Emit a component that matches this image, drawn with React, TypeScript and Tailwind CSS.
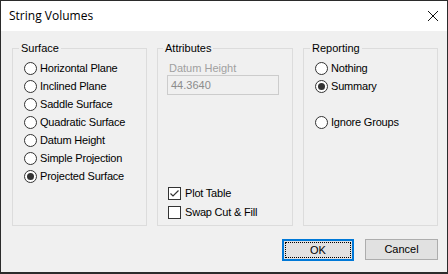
import React, { useState } from 'react';

const uiFont = { fontFamily: '"Liberation Sans", Arial, sans-serif' };

const Radio: React.FC<{ label: string; checked: boolean; onSelect: () => void }> = ({ label, checked, onSelect }) => (
  <label className="flex items-center h-[18px] cursor-default" onClick={onSelect}>
    <span className="w-[13px] h-[13px] rounded-full border border-[#333333] bg-white flex items-center justify-center shrink-0">
      {checked && <span className="w-[7px] h-[7px] rounded-full bg-[#333333]" />}
    </span>
    <span className="ml-[3px] text-[11px] leading-[13px] tracking-[-0.2px] text-black">{label}</span>
  </label>
);

const Check: React.FC<{ label: string; checked: boolean; onToggle: () => void }> = ({ label, checked, onToggle }) => (
  <label className="flex items-center h-[19px] cursor-default" onClick={onToggle}>
    <span className="w-[13px] h-[13px] border border-[#333333] bg-white flex items-center justify-center shrink-0">
      {checked && (
        <svg width="11" height="11" viewBox="0 0 11 11">
          <path d="M1.5 5.5 L4 8 L9.5 2.5" fill="none" stroke="#333333" strokeWidth="1.2" />
        </svg>
      )}
    </span>
    <span className="ml-[4px] text-[11px] leading-[13px] tracking-[-0.2px] text-black">{label}</span>
  </label>
);

const surfaces = [
  'Horizontal Plane',
  'Inclined Plane',
  'Saddle Surface',
  'Quadratic Surface',
  'Datum Height',
  'Simple Projection',
  'Projected Surface'
];

export default function App() {
  const [surface, setSurface] = useState('Projected Surface');
  const [reporting, setReporting] = useState('Summary');
  const [plotTable, setPlotTable] = useState(true);
  const [swap, setSwap] = useState(false);

  return (
    <div className="w-[448px] h-[274px] border border-[#2b2b2b] border-b-2 flex flex-col bg-[#f0f0f0]" style={uiFont}>
      {/* Title bar */}
      <div className="h-[30px] bg-white flex items-center justify-between pl-[8px] pr-[9px] shrink-0">
        <span className="text-[12px] text-black" style={{ fontFamily: '"Open Sans", "Noto Sans", sans-serif' }}>String Volumes</span>
        <svg width="10" height="10" viewBox="0 0 10 10">
          <path d="M0 0 L10 10 M10 0 L0 10" stroke="#111111" strokeWidth="1" />
        </svg>
      </div>

      {/* Groups */}
      <div className="flex pt-[11px] pl-[11px] gap-[10px]">
        <fieldset className="w-[135px] h-[184px] border border-[#dcdcdc] flex flex-col pt-[4px]">
          <legend className="ml-[6px] px-[2px] text-[11px] leading-[13px] text-black">Surface</legend>
          <div className="pl-[11px]">
            {surfaces.map((s) => (
              <Radio key={s} label={s} checked={surface === s} onSelect={() => setSurface(s)} />
            ))}
          </div>
        </fieldset>

        <fieldset className="w-[136px] h-[184px] border border-[#dcdcdc] flex flex-col pt-[6px] pb-[3px]">
          <legend className="ml-[5px] px-[2px] text-[11px] leading-[13px] text-black">Attributes</legend>
          <div className="h-[14px] pl-[11px] text-[11px] leading-[14px] text-[#a0a0a0]">Datum Height</div>
          <div className="ml-[9px] w-[112px] h-[20px] border border-[#cccccc] bg-[#f0f0f0] flex items-center pl-[3px] text-[11px] text-[#8c8c8c]">
            44.3640
          </div>
          <div className="mt-auto pl-[10px]">
            <Check label="Plot Table" checked={plotTable} onToggle={() => setPlotTable(!plotTable)} />
            <Check label="Swap Cut & Fill" checked={swap} onToggle={() => setSwap(!swap)} />
          </div>
        </fieldset>

        <fieldset className="w-[135px] h-[184px] border border-[#dcdcdc] flex flex-col pt-[4px]">
          <legend className="ml-[6px] px-[2px] text-[11px] leading-[13px] text-black">Reporting</legend>
          <div className="pl-[11px]">
            <Radio label="Nothing" checked={reporting === 'Nothing'} onSelect={() => setReporting('Nothing')} />
            <Radio label="Summary" checked={reporting === 'Summary'} onSelect={() => setReporting('Summary')} />
            <div className="h-[18px]" />
            <Radio label="Ignore Groups" checked={false} onSelect={() => {}} />
          </div>
        </fieldset>
      </div>

      {/* Buttons */}
      <div className="flex justify-end gap-[11px] pr-[9px] mt-[13px]">
        <button className="w-[72px] h-[22px] border-2 border-[#0078d7] bg-[#e1e1e1] p-[1px] text-[11px] text-black">
          <span className="flex items-center justify-center w-full h-full border border-dotted border-black">OK</span>
        </button>
        <button className="w-[73px] h-[21px] border border-[#adadad] bg-[#e1e1e1] text-[11px] text-black">Cancel</button>
      </div>
    </div>
  );
}
